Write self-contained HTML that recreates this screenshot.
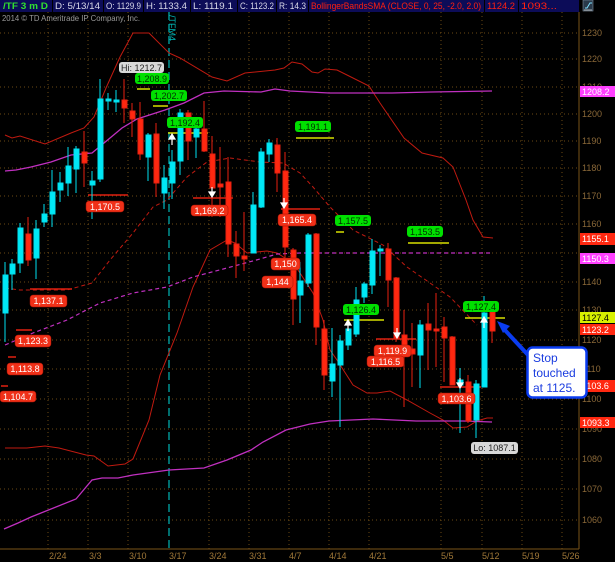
<!DOCTYPE html>
<html><head><meta charset="utf-8"><style>
html,body{margin:0;padding:0;background:#000;}
svg{display:block;font-family:"Liberation Sans",sans-serif;}
</style></head><body>
<svg width="615" height="562" viewBox="0 0 615 562" xmlns="http://www.w3.org/2000/svg">
<rect width="615" height="562" fill="#000"/>
<!-- grid -->
<g stroke="#6b4a14" stroke-width="1" stroke-dasharray="1,3">
<line x1="0" y1="33" x2="579" y2="33"/><line x1="0" y1="59" x2="579" y2="59"/><line x1="0" y1="87" x2="579" y2="87"/><line x1="0" y1="114" x2="579" y2="114"/><line x1="0" y1="141" x2="579" y2="141"/><line x1="0" y1="168" x2="579" y2="168"/><line x1="0" y1="196" x2="579" y2="196"/><line x1="0" y1="224" x2="579" y2="224"/><line x1="0" y1="253" x2="579" y2="253"/><line x1="0" y1="282" x2="579" y2="282"/><line x1="0" y1="310" x2="579" y2="310"/><line x1="0" y1="340" x2="579" y2="340"/><line x1="0" y1="369" x2="579" y2="369"/><line x1="0" y1="399" x2="579" y2="399"/><line x1="0" y1="429" x2="579" y2="429"/><line x1="0" y1="459" x2="579" y2="459"/><line x1="0" y1="489" x2="579" y2="489"/><line x1="0" y1="520" x2="579" y2="520"/>
<line x1="48" y1="12" x2="48" y2="549"/><line x1="88" y1="12" x2="88" y2="549"/><line x1="128" y1="12" x2="128" y2="549"/><line x1="209" y1="12" x2="209" y2="549"/><line x1="249" y1="12" x2="249" y2="549"/><line x1="289" y1="12" x2="289" y2="549"/><line x1="329" y1="12" x2="329" y2="549"/><line x1="369" y1="12" x2="369" y2="549"/><line x1="441" y1="12" x2="441" y2="549"/><line x1="482" y1="12" x2="482" y2="549"/><line x1="522" y1="12" x2="522" y2="549"/><line x1="562" y1="12" x2="562" y2="549"/>
</g>
<line x1="169" y1="12" x2="169" y2="549" stroke="#00a8a8" stroke-width="1.3" stroke-dasharray="8,4"/>
<text transform="translate(169,15) rotate(90)" font-size="9" fill="#00b8b8">/TFM4</text>
<text x="2" y="21" font-size="8.5" fill="#9a9a9a" textLength="138" lengthAdjust="spacingAndGlyphs">2014 © TD Ameritrade IP Company, Inc.</text>
<!-- bands -->
<g fill="none" stroke-width="1">
<polyline stroke="#c01a10" points="5,135 12,138 20,136 45,144 71,133 84,128 94,117 106,88 120,57 133,33 149,33 169,53 180,58 212,77 227,81 245,73 275,70 284,68 292,62 302,64 312,72 318,73 325,69 337,70 349,76 369,86 380,103 404,138 422,153 443,158 453,167 466,200 473,220 483,237 493,238"/>
<polyline stroke="#c01a10" points="5,448 27,448 45,446 59,448 86,455 94,456 108,466 125,464 133,459 149,420 160,375 177,333 193,287 210,250 227,240 235,243 247,253 267,251 277,253 293,263 300,273 313,293 323,320 330,350 337,360 353,385 367,393 377,393 390,391 407,400 430,413 443,420 453,428 467,427 477,421 487,418 493,418"/>
<polyline stroke="#c01a10" stroke-dasharray="4,3" points="5,288 20,290 67,290 92,283 110,260 133,233 153,207 167,200 187,177 207,162 230,158 260,162 283,163 300,173 313,187 330,207 353,230 383,245 407,267 430,283 450,297 477,325"/>
<polyline stroke="#c030c0" stroke-width="1.3" points="5,171 16,170 31,167 51,162 71,155 92,153 104,143 122,128 137,119 165,110 184,103 204,93 224,91 261,92 275,89 290,91 329,93 392,93 431,92 492,91"/>
<polyline stroke="#c030c0" stroke-width="1.3" points="4,529 18,523 31,517 76,499 92,480 102,478 118,478 133,475 169,470 204,468 227,460 251,450 263,442 286,430 310,424 329,421 373,419 416,421 463,421 492,422"/>
<polyline stroke="#c030c0" stroke-width="1.2" stroke-dasharray="4,3" points="5,345 33,333 67,320 100,303 133,293 167,287 193,277 227,268 260,259 277,254 300,253 492,253"/>
</g>
<!-- stop lines -->
<g stroke-width="1.5">
<line x1="88" y1="195" x2="128" y2="195" stroke="#e02010"/>
<line x1="30" y1="289" x2="72" y2="289" stroke="#e02010"/>
<line x1="16" y1="330" x2="32" y2="330" stroke="#e02010"/>
<line x1="8" y1="357" x2="16" y2="357" stroke="#e02010"/>
<line x1="1" y1="386" x2="8" y2="386" stroke="#e02010"/>
<line x1="193" y1="198" x2="233" y2="198" stroke="#e02010"/>
<line x1="281" y1="209" x2="320" y2="209" stroke="#e02010"/>
<line x1="376" y1="339" x2="416" y2="339" stroke="#e02010"/>
<line x1="440" y1="387" x2="481" y2="387" stroke="#e02010"/>
<line x1="137" y1="89" x2="150" y2="89" stroke="#d8e000"/>
<line x1="153" y1="106" x2="168" y2="106" stroke="#d8e000"/>
<line x1="168" y1="133" x2="208" y2="133" stroke="#d8e000"/>
<line x1="296" y1="138" x2="334" y2="138" stroke="#d8e000"/>
<line x1="336" y1="232" x2="344" y2="232" stroke="#d8e000"/>
<line x1="408" y1="243" x2="449" y2="243" stroke="#d8e000"/>
<line x1="344" y1="320" x2="384" y2="320" stroke="#d8e000"/>
<line x1="465" y1="318" x2="505" y2="318" stroke="#d8e000"/>
</g>
<!-- candles -->
<g stroke-width="1">
<g stroke="#00e0f0" fill="#00e8f5">
<line x1="5" y1="262" x2="5" y2="342"/><rect x="3" y="275" width="5" height="38"/>
<line x1="12" y1="259" x2="12" y2="290"/><rect x="10" y="264" width="5" height="10"/>
<line x1="20" y1="223" x2="20" y2="273"/><rect x="18" y="228" width="5" height="35"/>
<line x1="36" y1="220" x2="36" y2="279"/><rect x="34" y="229" width="5" height="29"/>
<line x1="44" y1="204" x2="44" y2="227"/><rect x="42" y="214" width="5" height="8"/>
<line x1="52" y1="170" x2="52" y2="227"/><rect x="50" y="192" width="5" height="22"/>
<line x1="60" y1="172" x2="60" y2="202"/><rect x="58" y="183" width="5" height="7"/>
<line x1="68" y1="147" x2="68" y2="196"/><rect x="66" y="166" width="5" height="17"/>
<line x1="76" y1="146" x2="76" y2="193"/><rect x="74" y="149" width="5" height="20"/>
<line x1="92" y1="171" x2="92" y2="219"/><rect x="90" y="181" width="5" height="4"/>
<line x1="100" y1="79" x2="100" y2="182"/><rect x="98" y="99" width="5" height="80"/>
<line x1="108" y1="93" x2="108" y2="110"/><rect x="106" y="99" width="5" height="2"/>
<line x1="116" y1="90" x2="116" y2="112"/><rect x="114" y="100" width="5" height="2"/>
<line x1="148" y1="133" x2="148" y2="181"/><rect x="146" y="135" width="5" height="22"/>
<line x1="164" y1="165" x2="164" y2="209"/><rect x="162" y="178" width="5" height="15"/>
<line x1="172" y1="150" x2="172" y2="199"/><rect x="170" y="162" width="5" height="21"/>
<line x1="180" y1="109" x2="180" y2="175"/><rect x="178" y="113" width="5" height="48"/>
<line x1="196" y1="117" x2="196" y2="158"/><rect x="194" y="129" width="5" height="8"/>
<line x1="253" y1="192" x2="253" y2="253"/><rect x="251" y="205" width="5" height="48"/>
<line x1="261" y1="148" x2="261" y2="208"/><rect x="259" y="152" width="5" height="55"/>
<line x1="269" y1="139" x2="269" y2="162"/><rect x="267" y="143" width="5" height="11"/>
<line x1="300" y1="262" x2="300" y2="323"/><rect x="298" y="281" width="5" height="14"/>
<line x1="308" y1="233" x2="308" y2="287"/><rect x="306" y="235" width="5" height="48"/>
<line x1="332" y1="328" x2="332" y2="397"/><rect x="330" y="364" width="5" height="17"/>
<line x1="340" y1="335" x2="340" y2="427"/><rect x="338" y="341" width="5" height="24"/>
<line x1="348" y1="322" x2="348" y2="350"/><rect x="346" y="329" width="5" height="16"/>
<line x1="356" y1="287" x2="356" y2="337"/><rect x="354" y="300" width="5" height="34"/>
<line x1="364" y1="282" x2="364" y2="303"/><rect x="362" y="284" width="5" height="13"/>
<line x1="372" y1="239" x2="372" y2="294"/><rect x="370" y="251" width="5" height="34"/>
<line x1="380" y1="245" x2="380" y2="276"/><rect x="378" y="249" width="5" height="2"/>
<line x1="420" y1="320" x2="420" y2="388"/><rect x="418" y="325" width="5" height="30"/>
<line x1="460" y1="368" x2="460" y2="433"/><rect x="458" y="380" width="5" height="5"/>
<line x1="476" y1="380" x2="476" y2="438"/><rect x="474" y="384" width="5" height="36"/>
<line x1="484" y1="296" x2="484" y2="387"/><rect x="482" y="313" width="5" height="74"/>
</g>
<g stroke="#e82010" fill="#ff2810">
<line x1="28" y1="217" x2="28" y2="266"/><rect x="26" y="234" width="5" height="26"/>
<line x1="84" y1="131" x2="84" y2="187"/><rect x="82" y="152" width="5" height="11"/>
<line x1="124" y1="79" x2="124" y2="123"/><rect x="122" y="100" width="5" height="8"/>
<line x1="132" y1="103" x2="132" y2="137"/><rect x="130" y="111" width="5" height="8"/>
<line x1="140" y1="102" x2="140" y2="160"/><rect x="138" y="119" width="5" height="35"/>
<line x1="156" y1="123" x2="156" y2="197"/><rect x="154" y="134" width="5" height="49"/>
<line x1="188" y1="110" x2="188" y2="160"/><rect x="186" y="113" width="5" height="28"/>
<line x1="204" y1="101" x2="204" y2="152"/><rect x="202" y="129" width="5" height="22"/>
<line x1="212" y1="136" x2="212" y2="217"/><rect x="210" y="154" width="5" height="34"/>
<line x1="220" y1="147" x2="220" y2="217"/><rect x="218" y="184" width="5" height="3"/>
<line x1="228" y1="157" x2="228" y2="257"/><rect x="226" y="182" width="5" height="62"/>
<line x1="236" y1="231" x2="236" y2="278"/><rect x="234" y="244" width="5" height="12"/>
<line x1="244" y1="212" x2="244" y2="271"/><rect x="242" y="256" width="5" height="3"/>
<line x1="277" y1="138" x2="277" y2="192"/><rect x="275" y="145" width="5" height="28"/>
<line x1="285" y1="152" x2="285" y2="260"/><rect x="283" y="171" width="5" height="76"/>
<line x1="293" y1="248" x2="293" y2="325"/><rect x="291" y="250" width="5" height="49"/>
<line x1="316" y1="233" x2="316" y2="345"/><rect x="314" y="234" width="5" height="93"/>
<line x1="324" y1="320" x2="324" y2="390"/><rect x="322" y="329" width="5" height="46"/>
<line x1="388" y1="243" x2="388" y2="307"/><rect x="386" y="249" width="5" height="31"/>
<line x1="396" y1="277" x2="396" y2="342"/><rect x="394" y="278" width="5" height="60"/>
<line x1="404" y1="310" x2="404" y2="407"/><rect x="402" y="335" width="5" height="19"/>
<line x1="412" y1="323" x2="412" y2="387"/><rect x="410" y="349" width="5" height="5"/>
<line x1="428" y1="303" x2="428" y2="370"/><rect x="426" y="324" width="5" height="6"/>
<line x1="436" y1="293" x2="436" y2="367"/><rect x="434" y="329" width="5" height="2"/>
<line x1="444" y1="317" x2="444" y2="382"/><rect x="442" y="327" width="5" height="11"/>
<line x1="452" y1="336" x2="452" y2="385"/><rect x="450" y="337" width="5" height="48"/>
<line x1="468" y1="375" x2="468" y2="423"/><rect x="466" y="382" width="5" height="39"/>
<line x1="492" y1="312" x2="492" y2="343"/><rect x="490" y="312" width="5" height="19"/>
</g>
</g>
<!-- arrows -->
<g fill="#fff" stroke="#fff" stroke-width="1.2">
<line x1="172" y1="137" x2="172" y2="145"/><path d="M169,139 L172,134 L175,139Z"/>
<line x1="212" y1="187" x2="212" y2="194"/><path d="M209,192 L212,197 L215,192Z"/>
<line x1="284" y1="198" x2="284" y2="205"/><path d="M281,203 L284,208 L287,203Z"/>
<line x1="348" y1="323" x2="348" y2="331"/><path d="M345,325 L348,320 L351,325Z"/>
<line x1="397" y1="328" x2="397" y2="335"/><path d="M394,333 L397,338 L400,333Z"/>
<line x1="460" y1="378" x2="460" y2="385"/><path d="M457,383 L460,388 L463,383Z"/>
<line x1="484" y1="320" x2="484" y2="328"/><path d="M481,322 L484,317 L487,322Z"/>
</g>
<!-- labels -->
<g font-size="9" text-anchor="middle" fill="#fff">
<g fill="#f03018" stroke="#a01000" stroke-width="0.5">
<rect x="86" y="201" width="38" height="11" rx="3"/>
<rect x="30" y="295" width="37" height="12" rx="3"/>
<rect x="15" y="335" width="36" height="12" rx="3"/>
<rect x="7" y="363" width="36" height="12" rx="3"/>
<rect x="0" y="391" width="36" height="11" rx="3"/>
<rect x="191" y="205" width="37" height="11" rx="3"/>
<rect x="278" y="214" width="38" height="12" rx="3"/>
<rect x="271" y="258" width="29" height="12" rx="3"/>
<rect x="262" y="276" width="31" height="12" rx="3"/>
<rect x="374" y="345" width="37" height="12" rx="3"/>
<rect x="367" y="356" width="37" height="11" rx="3"/>
<rect x="438" y="393" width="37" height="11" rx="3"/>
</g>
<g fill="#00e000">
<rect x="135" y="73" width="34" height="11" rx="3"/>
<rect x="151" y="90" width="36" height="11" rx="3"/>
<rect x="167" y="117" width="36" height="11" rx="3"/>
<rect x="295" y="121" width="36" height="11" rx="3"/>
<rect x="335" y="215" width="36" height="11" rx="3"/>
<rect x="407" y="226" width="36" height="11" rx="3"/>
<rect x="343" y="304" width="36" height="11" rx="3"/>
<rect x="463" y="301" width="36" height="11" rx="3"/>
</g>
<rect x="119" y="62" width="45" height="11" rx="3" fill="#d8d8d8"/>
<rect x="471" y="442" width="47" height="12" rx="3" fill="#d8d8d8"/>
<text x="105" y="210">1,170.5</text><text x="48.5" y="304">1,137.1</text><text x="33" y="344">1,123.3</text><text x="25" y="372">1,113.8</text><text x="18" y="400">1,104.7</text><text x="209.5" y="214">1,169.2</text><text x="297" y="223">1,165.4</text><text x="285.5" y="267">1,150</text><text x="277.5" y="285">1,144</text><text x="392.5" y="354">1,119.9</text><text x="385.5" y="365">1,116.5</text><text x="456.5" y="402">1,103.6</text>
<g fill="#003000"><text x="152" y="82">1,208.9</text><text x="169" y="99">1,202.7</text><text x="185" y="126">1,192.4</text><text x="313" y="130">1,191.1</text><text x="353" y="224">1,157.5</text><text x="425" y="235">1,153.5</text><text x="361" y="313">1,126.4</text><text x="481" y="310">1,127.4</text></g>
<g fill="#222"><text x="141.5" y="71">Hi: 1212.7</text><text x="494.5" y="451">Lo: 1087.1</text></g>
</g>
<!-- right axis -->
<line x1="579" y1="12" x2="579" y2="549" stroke="#7a5418"/>
<line x1="0" y1="549" x2="579" y2="549" stroke="#7a5418"/>
<g font-size="9" fill="#8a6838">
<text x="582" y="36">1230</text><text x="582" y="62">1220</text><text x="582" y="90">1210</text><text x="582" y="117">1200</text><text x="582" y="144">1190</text><text x="582" y="171">1180</text><text x="582" y="199">1170</text><text x="582" y="227">1160</text><text x="582" y="285">1140</text><text x="582" y="313">1130</text><text x="582" y="343">1120</text><text x="582" y="372">1110</text><text x="582" y="402">1100</text><text x="582" y="432">1090</text><text x="582" y="462">1080</text><text x="582" y="492">1070</text><text x="582" y="523">1060</text>
</g>
<g font-size="9">
<rect x="580" y="86" width="35" height="11" fill="#ff40ff"/><text x="582" y="95" fill="#fff">1208.2</text>
<rect x="580" y="233" width="35" height="12" fill="#ff2810"/><text x="582" y="242" fill="#fff">1155.1</text>
<rect x="580" y="253" width="35" height="11" fill="#ff40ff"/><text x="582" y="262" fill="#fff">1150.3</text>
<rect x="580" y="312" width="35" height="11" fill="#d8f000"/><text x="582" y="321" fill="#000">1127.4</text>
<rect x="580" y="324" width="35" height="11" fill="#ff2810"/><text x="582" y="333" fill="#fff">1123.2</text>
<rect x="580" y="380" width="35" height="12" fill="#ff2810"/><text x="582" y="389" fill="#fff">1103.6</text>
<rect x="580" y="417" width="35" height="11" fill="#ff2810"/><text x="582" y="426" fill="#fff">1093.3</text>
</g>
<!-- date axis -->
<g font-size="9" fill="#a07838">
<text x="49" y="559">2/24</text><text x="89" y="559">3/3</text><text x="129" y="559">3/10</text><text x="169" y="559">3/17</text><text x="209" y="559">3/24</text><text x="249" y="559">3/31</text><text x="289" y="559">4/7</text><text x="329" y="559">4/14</text><text x="369" y="559">4/21</text><text x="441" y="559">5/5</text><text x="482" y="559">5/12</text><text x="522" y="559">5/19</text><text x="562" y="559">5/26</text>
</g>
<!-- callout -->
<line x1="529" y1="356" x2="503" y2="328" stroke="#0a3cf0" stroke-width="4"/>
<path d="M497,321 L510,326 L503,333Z" fill="#0a3cf0"/>
<rect x="527.5" y="347.5" width="59" height="50" rx="5" fill="#fff" stroke="#0a3cf0" stroke-width="2.5"/>
<g font-size="12" fill="#1a3ce0"><text x="533" y="362">Stop</text><text x="533" y="377">touched</text><text x="533" y="392">at 1125.</text></g>
<!-- top bar -->
<rect x="0" y="0" width="579" height="12" fill="#0c0c58"/>
<g stroke="#000" stroke-width="1"><line x1="52.5" y1="0" x2="52.5" y2="12"/><line x1="103.5" y1="0" x2="103.5" y2="12"/><line x1="143.5" y1="0" x2="143.5" y2="12"/><line x1="190.5" y1="0" x2="190.5" y2="12"/><line x1="237.5" y1="0" x2="237.5" y2="12"/><line x1="276.5" y1="0" x2="276.5" y2="12"/><line x1="308.5" y1="0" x2="308.5" y2="12"/><line x1="484.5" y1="0" x2="484.5" y2="12"/><line x1="518.5" y1="0" x2="518.5" y2="12"/></g>
<g font-size="9" lengthAdjust="spacingAndGlyphs">
<text x="3" y="9" fill="#30e030" font-weight="bold" textLength="45" lengthAdjust="spacingAndGlyphs">/TF 3 m D</text>
<g fill="#d8d8e8"><text x="55" y="9" textLength="45" lengthAdjust="spacingAndGlyphs">D: 5/13/14</text><text x="106" y="9" textLength="35" lengthAdjust="spacingAndGlyphs">O: 1129.9</text><text x="146" y="9" textLength="41" lengthAdjust="spacingAndGlyphs">H: 1133.4</text><text x="193" y="9" textLength="40" lengthAdjust="spacingAndGlyphs">L: 1119.1</text><text x="240" y="9" textLength="34" lengthAdjust="spacingAndGlyphs">C: 1123.2</text><text x="279" y="9" textLength="27" lengthAdjust="spacingAndGlyphs">R: 14.3</text></g>
<g fill="#ff2010"><text x="311" y="9" textLength="170" lengthAdjust="spacingAndGlyphs">BollingerBandsSMA (CLOSE, 0, 25, -2.0, 2.0)</text><text x="487" y="9" textLength="28" lengthAdjust="spacingAndGlyphs">1124.2</text><text x="521" y="9" textLength="36" lengthAdjust="spacingAndGlyphs">1093...</text></g>
</g>
<rect x="583" y="0" width="10" height="11" fill="#2a3a4a" stroke="#8090a0" stroke-width="0.6"/>
<path d="M585,8 L587,8 L590,3 L592,3" stroke="#80e0ff" fill="none" stroke-width="1"/>
<line x1="584" y1="10" x2="592" y2="10" stroke="#ccc" stroke-width="0.8"/>
</svg>
</body></html>
